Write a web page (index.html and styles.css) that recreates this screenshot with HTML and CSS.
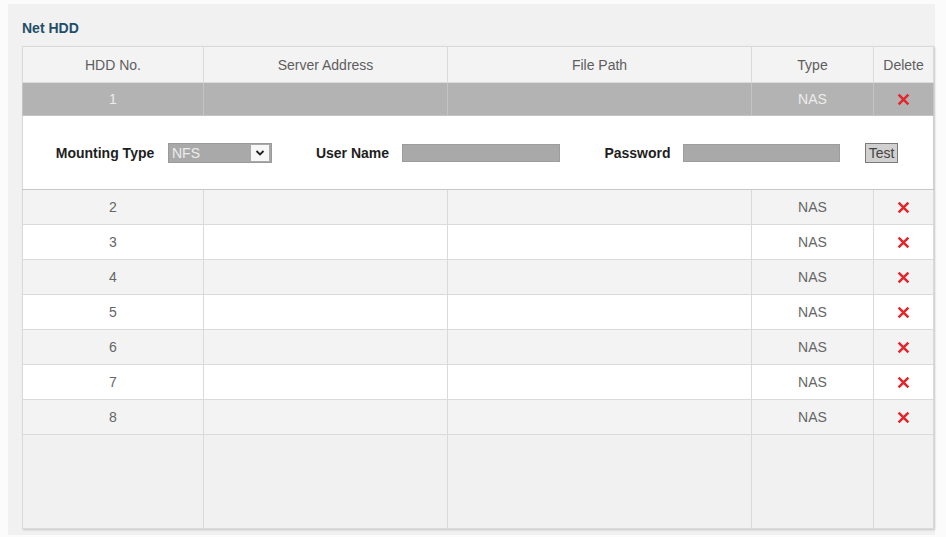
FILE: index.html
```html
<!DOCTYPE html>
<html>
<head>
<meta charset="utf-8">
<link rel="stylesheet" href="styles.css">
</head>
<body>
<div class="panel">
  <div class="title">Net HDD</div>
  <table class="hdd">
    <colgroup>
      <col class="c1"><col class="c2"><col class="c3"><col class="c4"><col class="c5">
    </colgroup>
    <thead>
      <tr><th>HDD No.</th><th>Server Address</th><th>File Path</th><th>Type</th><th>Delete</th></tr>
    </thead>
    <tbody>
      <tr class="sel"><td>1</td><td></td><td></td><td>NAS</td><td><svg class="x" viewBox="0 0 12 12"><path d="M1.5 1.5L10.5 10.5M10.5 1.5L1.5 10.5"/></svg></td></tr>
      <tr class="detail"><td colspan="5">
        <div class="form">
          <span class="lbl l1">Mounting Type</span>
          <div class="select"><span class="val">NFS</span><span class="arrow"><svg viewBox="0 0 10 8"><path d="M1.5 2L5 5.5L8.5 2"/></svg></span></div>
          <span class="lbl l2">User Name</span>
          <div class="input i1"></div>
          <span class="lbl l3">Password</span>
          <div class="input i2"></div>
          <div class="btn">Test</div>
        </div>
      </td></tr>
      <tr class="even"><td>2</td><td></td><td></td><td>NAS</td><td><svg class="x" viewBox="0 0 12 12"><path d="M1.5 1.5L10.5 10.5M10.5 1.5L1.5 10.5"/></svg></td></tr>
      <tr class="odd"><td>3</td><td></td><td></td><td>NAS</td><td><svg class="x" viewBox="0 0 12 12"><path d="M1.5 1.5L10.5 10.5M10.5 1.5L1.5 10.5"/></svg></td></tr>
      <tr class="even"><td>4</td><td></td><td></td><td>NAS</td><td><svg class="x" viewBox="0 0 12 12"><path d="M1.5 1.5L10.5 10.5M10.5 1.5L1.5 10.5"/></svg></td></tr>
      <tr class="odd"><td>5</td><td></td><td></td><td>NAS</td><td><svg class="x" viewBox="0 0 12 12"><path d="M1.5 1.5L10.5 10.5M10.5 1.5L1.5 10.5"/></svg></td></tr>
      <tr class="even"><td>6</td><td></td><td></td><td>NAS</td><td><svg class="x" viewBox="0 0 12 12"><path d="M1.5 1.5L10.5 10.5M10.5 1.5L1.5 10.5"/></svg></td></tr>
      <tr class="odd"><td>7</td><td></td><td></td><td>NAS</td><td><svg class="x" viewBox="0 0 12 12"><path d="M1.5 1.5L10.5 10.5M10.5 1.5L1.5 10.5"/></svg></td></tr>
      <tr class="even"><td>8</td><td></td><td></td><td>NAS</td><td><svg class="x" viewBox="0 0 12 12"><path d="M1.5 1.5L10.5 10.5M10.5 1.5L1.5 10.5"/></svg></td></tr>
      <tr class="filler"><td></td><td></td><td></td><td></td><td></td></tr>
    </tbody>
  </table>
</div>
</body>
</html>
```

FILE: styles.css
```css
html, body {
  margin: 0;
  padding: 0;
  background: #fbfbfb;
}
body {
  font-family: "Liberation Sans", Arial, sans-serif;
  font-size: 14px;
  color: #666;
}
.panel {
  margin: 4px 0 0 8px;
  width: 927px;
  height: 531px;
  box-sizing: border-box;
  padding: 16px 0 0 14px;
  background: #f1f1f1;
}
.title {
  height: 16px;
  line-height: 16px;
  font-weight: bold;
  font-size: 14px;
  color: #1f4e68;
  margin-bottom: 10px;
}
.hdd {
  width: 911px;
  table-layout: fixed;
  border-collapse: collapse;
  box-shadow: 1px 1px 2px rgba(0,0,0,0.18);
}
.c1 { width: 181px; }
.c2 { width: 244px; }
.c3 { width: 304px; }
.c4 { width: 122px; }
.c5 { width: 60px; }
.hdd th, .hdd td {
  border: 1px solid #dadada;
  padding: 0;
  text-align: center;
  font-weight: normal;
  vertical-align: middle;
}
.hdd thead tr { height: 36px; background: #f3f3f3; }
.hdd th { color: #5e5e5e; }
.sel { height: 33px; background: #b3b3b3; }
.sel td { color: #ececec; border-color: #c4c4c4; }
.detail { height: 74px; background: #fff; }
.detail td { border-bottom: 1px solid #c8c8c8; border-right: 1px solid #cfcfcf; }
.even { height: 35px; background: #f3f3f3; }
.odd { height: 35px; background: #fff; }
.even td, .odd td { color: #666; }
.filler { height: 94px; background: #f1f1f1; }
.x {
  width: 13px;
  height: 13px;
  display: block;
  margin: 0 auto;
}
.x path {
  stroke: #e3262b;
  stroke-width: 2.3;
  fill: none;
}
.form {
  display: flex;
  align-items: center;
  padding-left: 31px;
  height: 20px;
}
.lbl {
  font-weight: bold;
  color: #1e1e1e;
  font-size: 14px;
  white-space: nowrap;
  flex: none;
}
.l1 { width: 102px; margin-right: 12px; }
.l2 { width: 75px; margin-right: 12px; margin-left: 43px; }
.l3 { width: 67px; margin-right: 12px; margin-left: 44px; }
.select {
  width: 104px;
  height: 20px;
  box-sizing: border-box;
  border: 1px solid #9a9a9a;
  background: #a9a9a9;
  display: flex;
  align-items: center;
  justify-content: space-between;
  flex: none;
}
.val {
  color: #ececec;
  padding-left: 3px;
  font-size: 14px;
}
.arrow {
  width: 18px;
  height: 16px;
  margin-right: 2px;
  background: #f7f7f7;
  display: flex;
  align-items: center;
  justify-content: center;
}
.arrow svg { width: 10px; height: 8px; }
.arrow path { stroke: #222; stroke-width: 1.8; fill: none; }
.input {
  height: 18px;
  box-sizing: border-box;
  border: 1px solid #9d9d9d;
  background: #a9a9a9;
  flex: none;
}
.i1 { width: 158px; }
.i2 { width: 157px; margin-right: 25px; }
.btn {
  width: 33px;
  height: 20px;
  box-sizing: border-box;
  border: 1px solid #7a7a7a;
  background: #d0d0d0;
  color: #444;
  font-size: 14px;
  line-height: 18px;
  text-align: center;
  flex: none;
}
```
